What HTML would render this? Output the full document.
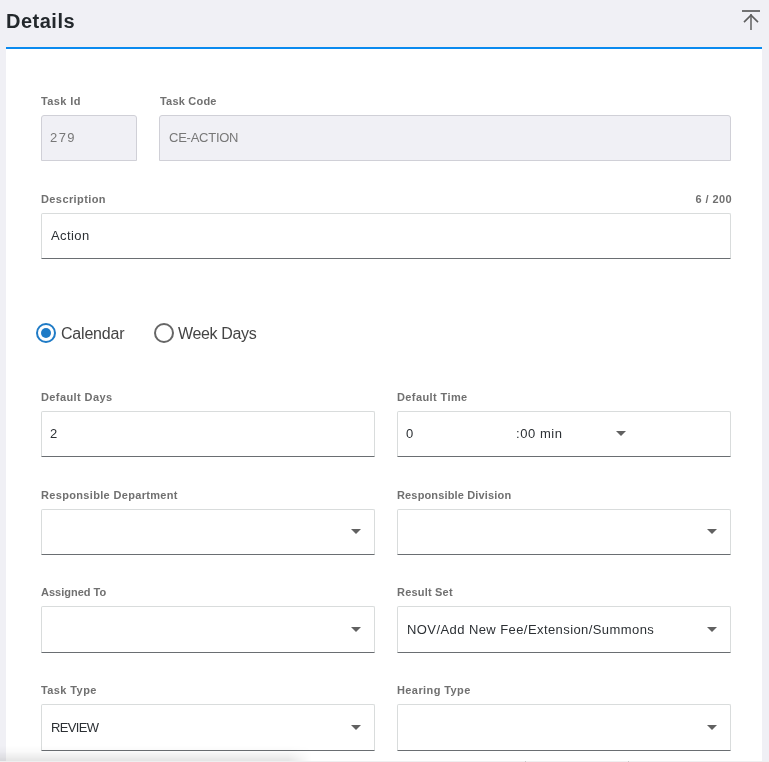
<!DOCTYPE html>
<html><head><meta charset="utf-8">
<style>
html,body{margin:0;padding:0;}
body{width:769px;height:762px;overflow:hidden;background:#f0f0f5;position:relative;will-change:transform;font-family:"Liberation Sans",sans-serif;}
.abs{position:absolute;}
.title{left:6px;top:9px;font-size:20px;font-weight:bold;color:#23282c;line-height:24px;white-space:nowrap;letter-spacing:0.5px;}
.topicon{left:740px;top:8px;width:22px;height:24px;}
.bar{left:6px;top:47px;width:756px;height:2px;background:#0a8aef;}
.panel{left:6px;top:49px;width:756px;height:713px;background:#fff;}
.lbl{position:absolute;font-size:11px;font-weight:bold;color:#707070;line-height:13px;white-space:nowrap;letter-spacing:0.4px;}
.box{position:absolute;box-sizing:border-box;height:46px;border:1px solid #d9dcdc;border-bottom:1px solid #6a6e72;border-radius:2px 2px 0 0;background:#fff;}
.box.dis{background:#f0f0f5;border:1px solid #d0d0d7;border-radius:3px 3px 0 0;}
.val{position:absolute;font-size:13px;color:#2c3034;line-height:16px;white-space:nowrap;}
.dis .val{color:#777;}
.tri{position:absolute;width:0;height:0;border-left:5px solid transparent;border-right:5px solid transparent;border-top:5px solid #616161;}
.radio{position:absolute;box-sizing:border-box;width:20px;height:20px;border-radius:50%;border:2px solid #666;}
.radio.on{border-color:#1f7bc6;}
.radio.on::after{content:"";position:absolute;left:3px;top:3px;width:10px;height:10px;border-radius:50%;background:#1f7bc6;}
.rtxt{position:absolute;font-size:16px;color:#444;line-height:18px;white-space:nowrap;letter-spacing:-0.2px;}
.shade{left:0;top:745px;width:320px;height:16px;background:linear-gradient(to bottom,rgba(0,0,0,0),rgba(0,0,0,0.02) 40%,rgba(0,0,0,0.1));-webkit-mask-image:linear-gradient(to right,#000 288px,rgba(0,0,0,0) 312px);mask-image:linear-gradient(to right,#000 288px,rgba(0,0,0,0) 312px);}
.lastrow{left:0;top:761px;width:769px;height:1px;background:#efeff0;}
.tick{top:761px;width:1px;height:1px;background:#c8c8c8;}
</style></head>
<body>
<div class="abs title">Details</div>
<svg class="abs topicon" viewBox="0 0 22 24" width="22" height="24">
  <line x1="2" y1="3" x2="20" y2="3" stroke="#535353" stroke-width="1.6"/>
  <line x1="11" y1="6" x2="11" y2="22" stroke="#6a6a6a" stroke-width="1.6"/>
  <polyline points="4,14.1 11,7.1 18,14.1" fill="none" stroke="#5f5f5f" stroke-width="1.6"/>
</svg>
<div class="abs bar"></div>
<div class="abs panel"></div>

<!-- Row 1 -->
<div class="lbl" style="left:41px;top:95px;">Task Id</div>
<div class="box dis" style="left:41px;top:115px;width:96px;"><div class="val" style="left:8px;top:14px;letter-spacing:1.4px;">279</div></div>
<div class="lbl" style="left:160px;top:95px;letter-spacing:0.2px;">Task Code</div>
<div class="box dis" style="left:159px;top:115px;width:572px;"><div class="val" style="left:9px;top:14px;letter-spacing:-0.25px;">CE-ACTION</div></div>

<!-- Row 2 -->
<div class="lbl" style="left:41px;top:193px;">Description</div>
<div class="lbl" style="left:672px;top:193px;width:60px;text-align:right;">6 / 200</div>
<div class="box" style="left:41px;top:213px;width:690px;"><div class="val" style="left:9px;top:14px;letter-spacing:0.4px;">Action</div></div>

<!-- Radios -->
<div class="radio on" style="left:36px;top:323px;"></div>
<div class="rtxt" style="left:61px;top:325px;">Calendar</div>
<div class="radio" style="left:154px;top:323px;"></div>
<div class="rtxt" style="left:178px;top:325px;letter-spacing:-0.35px;">Week Days</div>

<!-- Row 3 -->
<div class="lbl" style="left:41px;top:391px;">Default Days</div>
<div class="box" style="left:41px;top:411px;width:334px;"><div class="val" style="left:8px;top:14px;">2</div></div>
<div class="lbl" style="left:397px;top:391px;">Default Time</div>
<div class="box" style="left:397px;top:411px;width:334px;">
  <div class="val" style="left:8px;top:14px;">0</div>
  <div class="val" style="left:118px;top:14px;letter-spacing:0.55px;">:00 min</div>
  <div class="tri" style="left:218px;top:19px;"></div>
</div>

<!-- Row 4 -->
<div class="lbl" style="left:41px;top:489px;letter-spacing:0.33px;">Responsible Department</div>
<div class="box" style="left:41px;top:509px;width:334px;"><div class="tri" style="left:309px;top:19px;"></div></div>
<div class="lbl" style="left:397px;top:489px;letter-spacing:0.15px;">Responsible Division</div>
<div class="box" style="left:397px;top:509px;width:334px;"><div class="tri" style="left:309px;top:19px;"></div></div>

<!-- Row 5 -->
<div class="lbl" style="left:41px;top:586px;letter-spacing:0;">Assigned To</div>
<div class="box" style="left:41px;top:606px;width:334px;height:47px;"><div class="tri" style="left:309px;top:20px;"></div></div>
<div class="lbl" style="left:397px;top:586px;letter-spacing:0.2px;">Result Set</div>
<div class="box" style="left:397px;top:606px;width:334px;height:47px;">
  <div class="val" style="left:9px;top:15px;letter-spacing:0.42px;">NOV/Add New Fee/Extension/Summons</div>
  <div class="tri" style="left:309px;top:20px;"></div>
</div>

<!-- Row 6 -->
<div class="lbl" style="left:41px;top:684px;">Task Type</div>
<div class="box" style="left:41px;top:704px;width:334px;height:47px;"><div class="val" style="left:9px;top:15px;letter-spacing:-0.65px;">REVIEW</div><div class="tri" style="left:308.5px;top:20px;"></div></div>
<div class="lbl" style="left:397px;top:684px;">Hearing Type</div>
<div class="box" style="left:397px;top:704px;width:334px;height:47px;"><div class="tri" style="left:308.5px;top:20px;"></div></div>

<div class="abs shade"></div>
<div class="abs lastrow"></div>
<div class="abs tick" style="left:525px;"></div>
<div class="abs tick" style="left:628px;"></div>
</body></html>
